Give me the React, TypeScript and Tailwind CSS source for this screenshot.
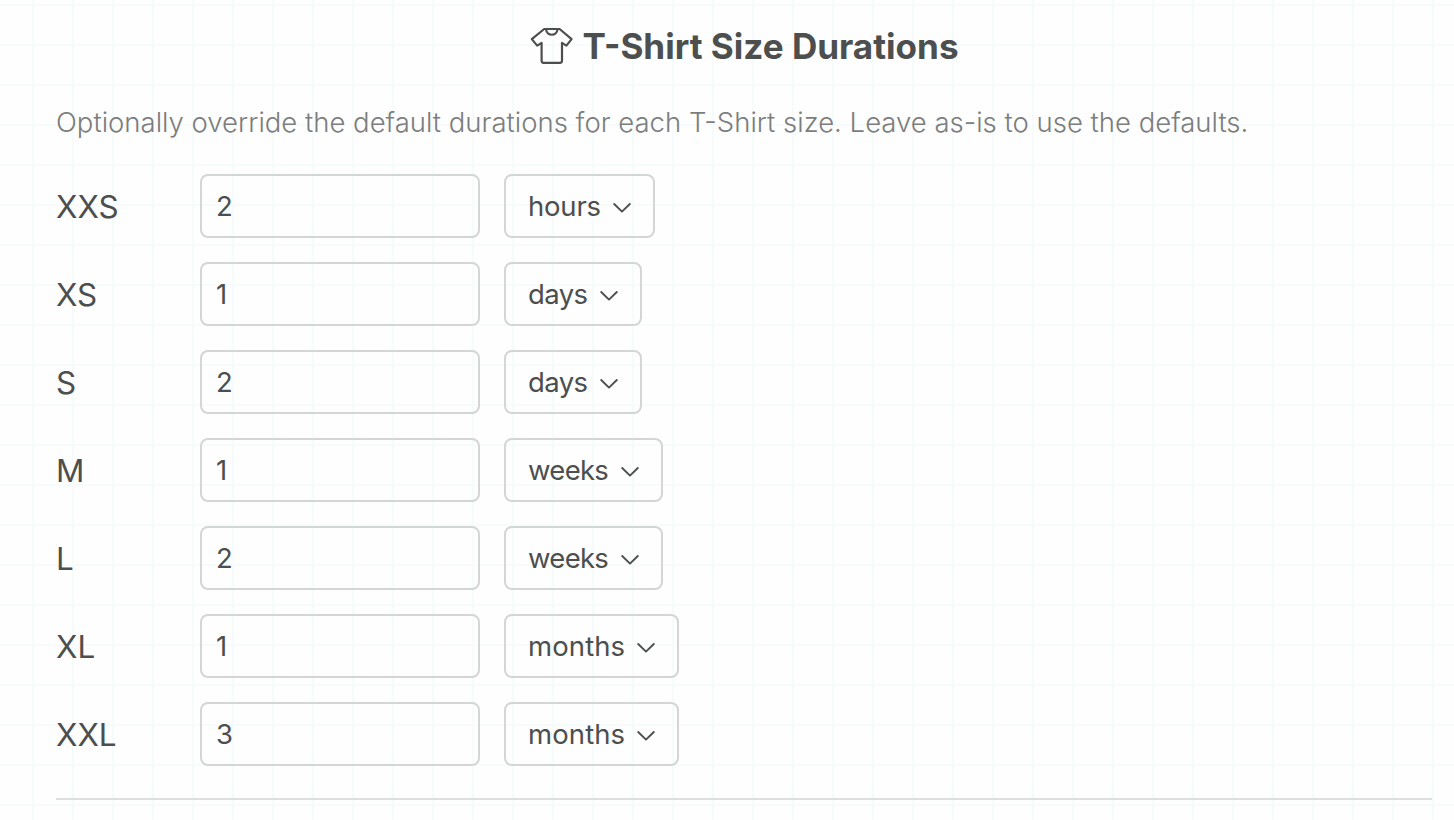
import { useState } from "react";

type Unit = "hours" | "days" | "weeks" | "months";

interface SizeDuration {
  size: string;
  amount: string;
  unit: Unit;
}

const DEFAULTS: SizeDuration[] = [
  { size: "XXS", amount: "2", unit: "hours" },
  { size: "XS", amount: "1", unit: "days" },
  { size: "S", amount: "2", unit: "days" },
  { size: "M", amount: "1", unit: "weeks" },
  { size: "L", amount: "2", unit: "weeks" },
  { size: "XL", amount: "1", unit: "months" },
  { size: "XXL", amount: "3", unit: "months" },
];

const UNIT_STYLES: Record<Unit, { button: string; text: string }> = {
  hours: { button: "w-[151px]", text: "tracking-[-0.2px]" },
  days: { button: "w-[138px]", text: "tracking-[-0.6px]" },
  weeks: { button: "w-[159px]", text: "tracking-[-0.7px]" },
  months: { button: "w-[175px]", text: "tracking-[0.1px]" },
};

function ShirtIcon() {
  return (
    <svg className="h-[38px] w-[44px] shrink-0" viewBox="0 0 44 38" fill="none" stroke="currentColor" strokeWidth="2.2" strokeLinejoin="round" strokeLinecap="round">
      <path d="M14.2 2H29.6L41.6 12.1L36.4 18.6L32 15.9V33.8Q32 35.8 30 35.8H13.6Q11.6 35.8 11.6 33.8V15.9L7.2 18.6L1.8 12.1Z" />
      <path d="M16 2.2C16.8 9.6 26.8 9.6 27.6 2.2" />
    </svg>
  );
}

function ChevronIcon() {
  return (
    <svg className="mt-[3px] h-5 w-5 shrink-0" viewBox="0 0 20 20" fill="none" stroke="currentColor" strokeWidth="1.9" strokeLinecap="round" strokeLinejoin="round">
      <path d="M2.2 6L10 13.6L17.8 6" />
    </svg>
  );
}

function DurationRow({ row, onAmount }: { row: SizeDuration; onAmount: (v: string) => void }) {
  const unit = UNIT_STYLES[row.unit];
  return (
    <div className="flex h-16 items-center">
      <span className="w-36 shrink-0 pt-px text-[31.4px] leading-10">{row.size}</span>
      <input
        aria-label={row.size}
        value={row.amount}
        onChange={(e) => onAmount(e.target.value)}
        className="h-16 w-[280px] rounded-lg border-2 border-[#d4d5d5] px-[14px] text-[27.5px] outline-none"
      />
      <button
        type="button"
        className={`ml-6 flex h-16 items-center justify-between rounded-lg border-2 border-[#d4d5d5] pl-[22px] pr-[21px] text-[27.5px] ${unit.button}`}
      >
        <span className={`pt-px ${unit.text}`}>{row.unit}</span>
        <ChevronIcon />
      </button>
    </div>
  );
}

export default function App() {
  const [rows, setRows] = useState(DEFAULTS);

  return (
    <main className="h-[820px] w-full overflow-hidden bg-[#fefefe] bg-[linear-gradient(to_right,#f6fcfb_2px,transparent_2px),linear-gradient(to_bottom,#f6fcfb_2px,transparent_2px)] bg-[length:40px_40px] bg-[position:32px_4px] pl-14 pr-[22px] font-['Inter',sans-serif] text-[#4d4e4e]">
      <header className="flex h-[92px] items-center justify-center gap-2 pl-px">
        <ShirtIcon />
        <h1 className="pt-px text-[35.1px] font-bold leading-none">T-Shirt Size Durations</h1>
      </header>
      <p className="h-[82px] whitespace-nowrap pt-[10px] text-[27.5px] font-light leading-10 text-[#7c7d7d]">
        Optionally override the default durations for each T-Shirt size. Leave as-is to use the defaults.
      </p>
      <div className="flex flex-col gap-6">
        {rows.map((row, i) => (
          <DurationRow
            key={row.size}
            row={row}
            onAmount={(amount) => setRows(rows.map((r, j) => (j === i ? { ...r, amount } : r)))}
          />
        ))}
      </div>
      <hr className="mt-8 border-0 border-t-2 border-[#dedfdf]" />
    </main>
  );
}
